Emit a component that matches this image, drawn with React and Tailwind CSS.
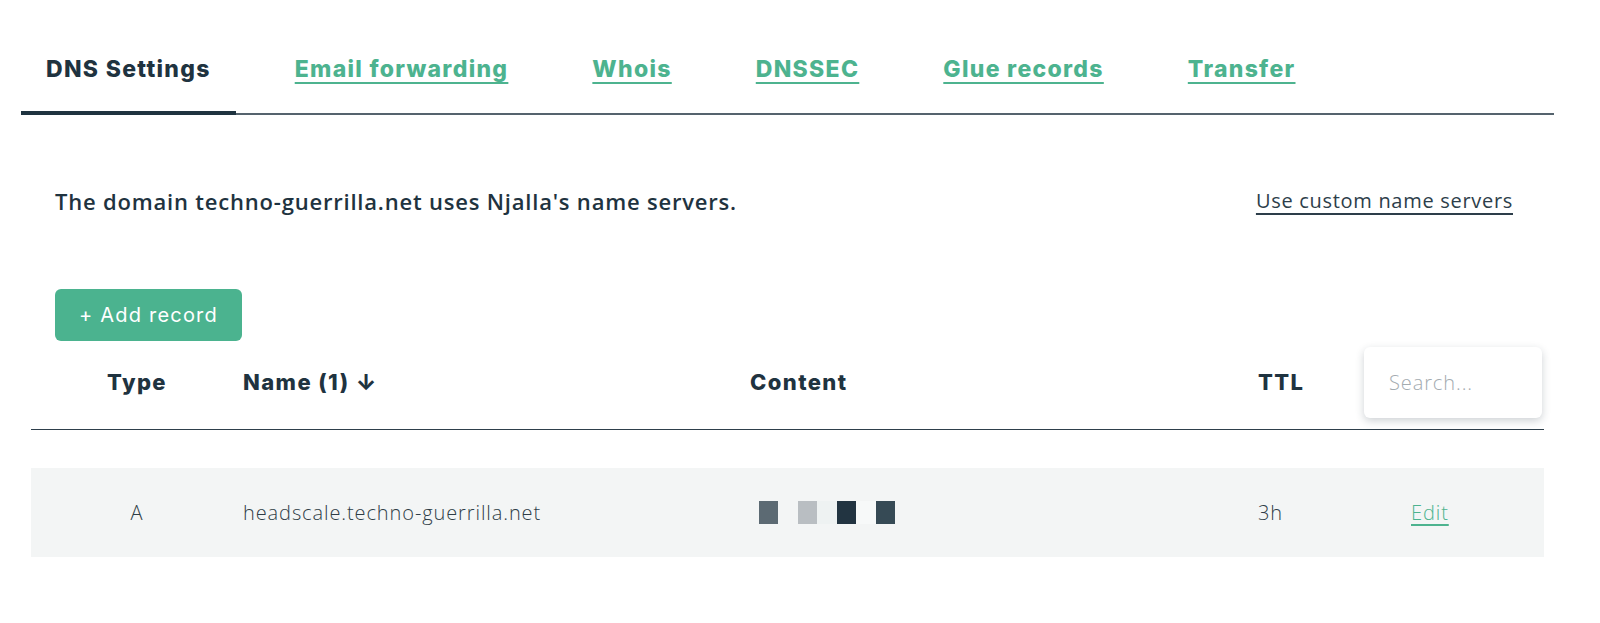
const tabs = [
  { label: 'DNS Settings', active: true },
  { label: 'Email forwarding' },
  { label: 'Whois' },
  { label: 'DNSSEC' },
  { label: 'Glue records' },
  { label: 'Transfer' },
];

// pixelated content (masked IP)
const cells = [
  'w-[19px] bg-[#5c6a73]',
  'w-[20px] bg-[#f3f5f5]',
  'w-[19px] bg-[#b9bec2]',
  'w-[20px] bg-[#eef2f2]',
  'w-[19px] bg-[#223441]',
  'w-[20px] bg-[#f7f9f9]',
  'w-[19px] bg-[#364a55]',
];

const heading = "font-['Inter',sans-serif]";
const body = "font-['Open_Sans',sans-serif]";

export default function App() {
  return (
    <div className="min-h-screen bg-white pt-[37px] text-[#1f3340]">
      <div className="ml-[21px] w-[1533px]">
        {/* tabs */}
        <nav className="flex gap-[34px] border-b-2 border-[#55636d]">
          {tabs.map((t) => (
            <a
              key={t.label}
              href="#"
              className={`${heading} -mb-[2px] px-[25px] pt-4 pb-[26px] text-[23px] leading-8 font-extrabold tracking-[1.3px] border-b-4 ${
                t.active
                  ? 'border-[#1f3340] text-[#1f3340]'
                  : 'border-transparent text-[#4db38f] underline decoration-2 underline-offset-[5px]'
              }`}
            >
              {t.label}
            </a>
          ))}
        </nav>

        <div className="pl-[34px] pr-[41px]">
          <div className="mt-[72px] flex items-center justify-between">
            <p className={`${body} text-[22px] leading-7 font-semibold tracking-[0.8px] text-[#1f3340]`}>
              The domain techno-guerrilla.net uses Njalla's name servers.
            </p>
            <a href="#" className={`${body} text-[20px] leading-7 tracking-[0.7px] text-[#2d3e4a] underline underline-offset-[5px]`}>
              Use custom name servers
            </a>
          </div>

          <button className={`${heading} mt-[74px] flex h-[52px] w-[187px] items-center justify-center rounded-md bg-[#4bb38f] text-[20px] tracking-[1.2px] text-white`}>
            + Add record
          </button>
        </div>

        {/* table */}
        <div className="mx-[10px] mt-[6px]">
          <div className={`${heading} grid grid-cols-[212px_507px_508px_106px_1fr] items-center border-b border-[#2e3f4b] pb-[11px] text-[22px] font-extrabold tracking-[1.4px]`}>
            <div className="text-center">Type</div>
            <div>Name (1) ↓</div>
            <div>Content</div>
            <div>TTL</div>
            <div className="pr-[2px]">
              <input
                type="text"
                placeholder="Search..."
                className={`${body} h-[71px] w-[178px] rounded-md bg-white px-[25px] text-[20px] font-light tracking-[0.9px] text-[#1f3340] shadow-[0_3px_8px_rgba(31,51,64,0.22)] outline-none placeholder:text-[#a3abb0]`}
              />
            </div>
          </div>

          <div className={`${body} mt-[38px] grid h-[89px] grid-cols-[212px_507px_508px_106px_1fr] items-center bg-[#f3f5f5] text-[20px] font-light tracking-[0.9px] text-[#2f3d47]`}>
            <div className="text-center">A</div>
            <div>headscale.techno-guerrilla.net</div>
            <div className="flex pl-[9px]">
              {cells.map((c, i) => (
                <span key={i} className={`${c} h-[23px]`} />
              ))}
            </div>
            <div>3h</div>
            <div className="pl-[47px]">
              <a href="#" className="text-[#4db38f] underline underline-offset-4">Edit</a>
            </div>
          </div>
        </div>
      </div>
    </div>
  );
}
